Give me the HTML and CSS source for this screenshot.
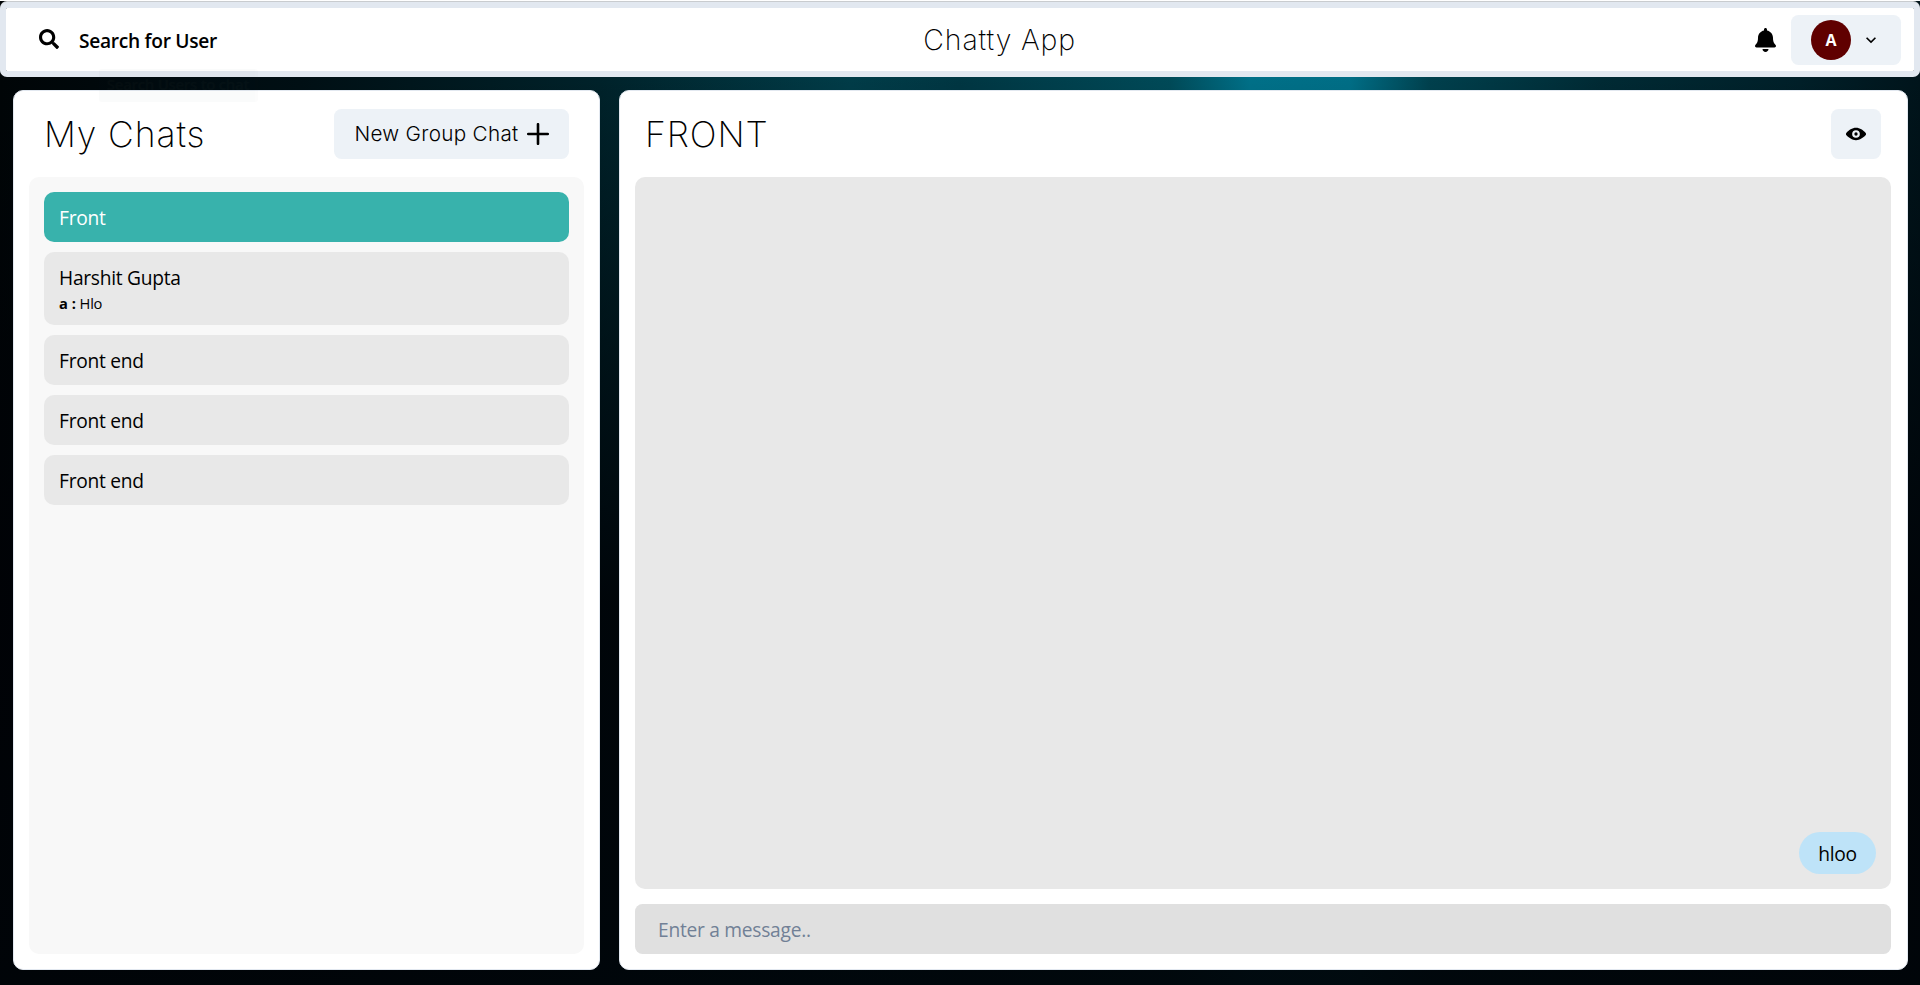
FILE: index.html
```html
<!DOCTYPE html>
<html lang="en">
<head>
<meta charset="utf-8">
<title>Chatty App</title>
<link rel="stylesheet" href="styles.css">
</head>
<body>
<header class="navbar">
  <button class="search-btn">
    <svg class="search-icon" viewBox="0 0 512 512"><path fill="currentColor" d="M505 442.7L405.3 343c-4.5-4.5-10.6-7-17-7H372c27.6-35.3 44-79.7 44-128C416 93.1 322.9 0 208 0S0 93.1 0 208s93.1 208 208 208c48.3 0 92.7-16.4 128-44v16.300c0 6.400 2.500 12.500 7 17l99.700 99.700c9.400 9.400 24.600 9.400 33.900 0l28.300-28.300c9.400-9.400 9.400-24.600.1-34zM208 336c-70.700 0-128-57.200-128-128 0-70.700 57.200-128 128-128 70.700 0 128 57.200 128 128 0 70.700-57.200 128-128 128z"/></svg>
    <span class="search-label">Search for User</span>
    <span class="tooltip">Search Users to chat</span>
  </button>
  <h1 class="brand">Chatty App</h1>
  <div class="nav-actions">
    <svg class="bell-icon" viewBox="0 0 448 512"><path fill="currentColor" d="M224 512c35.320 0 63.970-28.650 63.970-64H160.030c0 35.350 28.650 64 63.970 64zm215.390-149.710c-19.320-20.760-55.470-51.990-55.470-154.290 0-77.700-54.480-139.900-127.940-155.160V32c0-17.670-14.320-32-31.980-32s-31.980 14.330-31.980 32v20.840C118.560 68.100 64.080 130.300 64.080 208c0 102.300-36.150 133.530-55.470 154.290-6 6.450-8.660 14.160-8.610 21.710.11 16.400 12.980 32 32.100 32h383.800c19.120 0 32-15.600 32.100-32 .05-7.550-2.610-15.270-8.610-21.710z"/></svg>
    <button class="profile-btn">
      <span class="avatar">A</span>
      <svg class="chevron" viewBox="0 0 24 24"><path fill="currentColor" d="M16.590 8.590L12 13.170 7.410 8.590 6 10l6 6 6-6z"/></svg>
    </button>
  </div>
</header>
<main class="chat-page">
  <aside class="panel chats">
    <div class="panel-head chats-head">
      <h2 class="title title-chats">My Chats</h2>
      <button class="btn group-btn"><span class="group-label">New Group Chat</span>
        <svg class="plus" viewBox="0 0 22 22"><path d="M11 1.200v19.600M1.200 11h19.600" stroke="currentColor" stroke-width="2.600" stroke-linecap="round"/></svg>
      </button>
    </div>
    <div class="chat-list">
      <div class="chat active"><span>Front</span></div>
      <div class="chat"><span>Harshit Gupta</span><div class="last"><b>a :</b> Hlo</div></div>
      <div class="chat"><span>Front end</span></div>
      <div class="chat"><span>Front end</span></div>
      <div class="chat"><span>Front end</span></div>
    </div>
  </aside>
  <section class="panel conversation">
    <div class="panel-head conv-head">
      <h2 class="title title-front">FRONT</h2>
      <button class="btn eye-btn">
        <svg class="eye" viewBox="0 0 24 24"><path fill="currentColor" d="M23.432 10.524C20.787 7.614 16.400 4.538 12 4.600 7.600 4.537 3.213 7.615.568 10.524a2.211 2.211 0 0 0 0 2.948C3.182 16.351 7.507 19.400 11.839 19.400h.308c4.347 0 8.671-3.049 11.288-5.929a2.210 2.210 0 0 0-.003-2.947zM7.400 12a4.600 4.600 0 1 1 4.600 4.600A4.600 4.600 0 0 1 7.400 12z"/><circle cx="12" cy="12" r="2" fill="currentColor"/></svg>
      </button>
    </div>
    <div class="messages"><span class="bubble">hloo</span></div>
    <div class="composer"><span class="placeholder">Enter a message..</span></div>
  </section>
</main>
</body>
</html>
```
FILE: styles.css
```css
* { box-sizing: border-box; }
body {
  margin: 0;
  height: 985px;
  display: flex;
  flex-direction: column;
  overflow: hidden;
  border-top: 1px solid #fff;
  font: 19.200px/30px "Open Sans", "Noto Sans", sans-serif;
  letter-spacing: -.27px;
  color: #000;
  background:
    linear-gradient(180deg, transparent 77px, rgba(0, 2, 6, .5) 350px, rgba(0, 2, 6, .9) 600px, rgba(0, 4, 8, .94) 985px),
    linear-gradient(90deg, #000507, #000f14 300px, #00222a 600px, #013c48 850px, #003642 960px, #004a58 1170px, #007088 1250px, #006e86 1350px, #00404d 1430px, #002a34 1600px, #001f28 1800px, #00141b 1920px);
}
button { font: inherit; letter-spacing: inherit; color: inherit; border: 0; padding: 0; background: none; }
h1, h2 { margin: 0; }
svg { display: block; flex: none; }

.navbar {
  flex: none;
  height: 75px;
  margin-top: 1px;
  display: grid;
  grid-template-columns: 1fr auto 838px;
  align-items: center;
  background: #fff padding-box;
  border: 6px solid #e2e8f0;
  border-radius: 7px;
  box-shadow: 0 -1px 0 #c9cccf;
}
.search-btn { display: flex; align-items: center; gap: 20.500px; margin-left: 32.500px; justify-self: start; position: relative; font-weight: 600; letter-spacing: -.3px; }
.search-icon { width: 20px; height: 20px; margin-top: -1px; }
.search-label { padding-top: 2px; }
.tooltip {
  position: absolute;
  left: 60px;
  top: 45px;
  width: 159px;
  height: 33px;
  font-size: 15px;
  line-height: 31px;
  border-radius: 3px;
  color: #fff;
  background: #2d3748;
  opacity: .015;
  white-space: nowrap;
}
.brand { font: 200 28.500px/45px Inter, sans-serif; letter-spacing: .850px; }
.nav-actions { display: flex; align-items: center; justify-content: flex-end; gap: 15px; padding-right: 13px; }
.bell-icon { width: 21px; height: 24px; }
.profile-btn { width: 110px; height: 50px; display: flex; align-items: center; gap: 10px; padding-left: 20px; border-radius: 7.500px; background: #edf2f7; }
.avatar { width: 40px; height: 40px; border-radius: 50%; background: #600000; color: #fff; font-size: 16px; font-weight: 700; line-height: 41px; text-align: center; }
.chevron { width: 20px; height: 20px; }

.chat-page { flex: 1; min-height: 0; display: grid; grid-template-columns: 587px 1289px; gap: 19px; padding: 13px 12px 15px 13px; }
.panel { display: flex; flex-direction: column; min-height: 0; background: #fff; border: 1px solid #e2e8f0; border-radius: 10px; padding: 18px 15px 15px; }
.conversation { padding-right: 16px; }
.panel-head { display: flex; align-items: center; justify-content: space-between; height: 50px; flex: none; margin-bottom: 18px; }
.chats-head { padding: 0 15px 0 15px; }
.conv-head { padding: 0 10px 0 10px; }
.title { font: 200 35.500px/50px Inter, sans-serif; letter-spacing: .9px; padding-top: 1px; }
.btn { display: flex; align-items: center; justify-content: center; height: 50px; border-radius: 7.500px; background: #edf2f7; }
.group-btn { width: 235px; gap: 8px; font: 350 20.700px/30px Inter, sans-serif; letter-spacing: .3px; }
.plus { width: 22px; height: 22px; }
.eye-btn { width: 50px; }
.eye { width: 20px; height: 20px; }
.chat-list { flex: 1; display: flex; flex-direction: column; gap: 10px; padding: 15px; border-radius: 10px; background: #f8f8f8; }
.chat { padding: 11px 15px 9px; border-radius: 10px; background: #e8e8e8; }
.chat.active { background: #38b2ac; color: #fff; }
.chat span { display: block; white-space: nowrap; }
.last { font-size: 14.700px; line-height: 23px; margin: -1px 0 1px; word-spacing: .5px; }
.messages { flex: 1; display: flex; align-items: flex-end; justify-content: flex-end; padding: 15px; border-radius: 10px; background: #e8e8e8; }
.bubble { width: 77px; height: 42px; padding-top: 7px; line-height: 30px; text-align: center; border-radius: 21px; background: #bee3f8; }
.composer { flex: none; height: 50px; margin-top: 15px; padding: 11px 23px; border-radius: 7.500px; background: #e0e0e0; color: #718096; }
```
